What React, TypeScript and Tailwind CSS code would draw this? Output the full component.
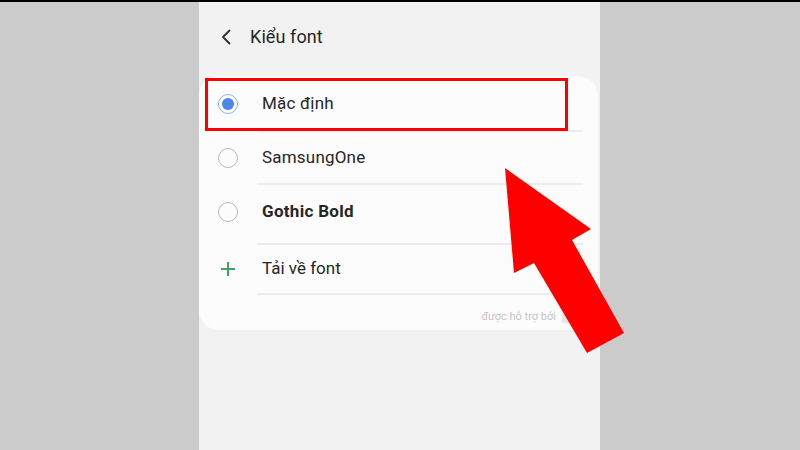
import React from "react";

function Radio({ selected }: { selected?: boolean }) {
  return selected ? (
    <div className="w-[20px] h-[20px] rounded-full border-[1.5px] border-[#8fb3ee] flex items-center justify-center shrink-0">
      <div className="w-[12px] h-[12px] rounded-full bg-[#4b86ea]" />
    </div>
  ) : (
    <div className="w-[20px] h-[20px] rounded-full border-[1.5px] border-[#b9b9b9] shrink-0" />
  );
}

function Divider() {
  return <div className="ml-[58px] mr-[15px] h-[2px] bg-[#ececec]" />;
}

export default function App() {
  return (
    <div
      className="relative w-[800px] h-[450px] overflow-hidden flex border-t-2 border-black bg-[#cbcbcb]"
      style={{ fontFamily: "Roboto, 'Noto Sans', sans-serif" }}
    >
      <div className="w-[199px] shrink-0 bg-[#cbcbcb]" />
      <div className="w-[401px] shrink-0 bg-[#f2f2f2] flex flex-col">
        <div className="h-[74px] flex items-center pl-[22px] pb-[5px]">
          <svg width="10" height="16" viewBox="0 0 10 16" className="mr-[19px]">
            <path d="M8.5 1.5 L2 8 L8.5 14.5" fill="none" stroke="#2f2f2f" strokeWidth="1.8" strokeLinecap="round" strokeLinejoin="round" />
          </svg>
          <span className="text-[18px] text-[#262626] tracking-[0.1px]">Kiểu font</span>
        </div>
        <div className="mr-[2px] bg-[#fcfcfc] rounded-[20px] flex flex-col">
          <div className="h-[54px] flex items-center pl-[19px] pt-[2px]">
            <Radio selected />
            <span className="ml-[24px] text-[17px] text-[#262626] tracking-[0.2px]">Mặc định</span>
          </div>
          <Divider />
          <div className="h-[51px] flex items-center pl-[19px]">
            <Radio />
            <span className="ml-[24px] text-[17px] text-[#262626] tracking-[0.2px]">SamsungOne</span>
          </div>
          <Divider />
          <div className="h-[58px] flex items-center pl-[19px] pb-[4px]">
            <Radio />
            <span className="ml-[24px] text-[17px] font-bold text-[#262626] tracking-[0.3px]">Gothic Bold</span>
          </div>
          <Divider />
          <div className="h-[48px] flex items-center pl-[20px]">
            <svg width="18" height="18" viewBox="0 0 18 18" className="shrink-0">
              <path d="M9 2 V16 M2 9 H16" stroke="#3ea35c" strokeWidth="2" />
            </svg>
            <span className="ml-[25px] text-[17px] text-[#262626]">Tải về font</span>
          </div>
          <Divider />
          <div className="h-[35px] flex items-center justify-end pr-[28px] pt-[10px]">
            <span className="text-[11px] text-[#c4c4c4]">được hỗ trợ bởi</span>
            <div className="ml-[6px] w-[8px] h-[10px] bg-[#e6e6e6] rounded-[2px]" />
          </div>
        </div>
      </div>
      <div className="flex-1 bg-[#cbcbcb]" />

      <div className="absolute left-[205px] top-[76px] w-[363px] h-[53px] border-[3px] border-[#ff0000]" />

      <svg className="absolute left-0 top-0" width="800" height="450" viewBox="0 0 800 450">
        <polygon
          points="505,166 591,227 572,238 624,331 587,351 534,261 514,271"
          fill="#ff0000"
        />
      </svg>
    </div>
  );
}
